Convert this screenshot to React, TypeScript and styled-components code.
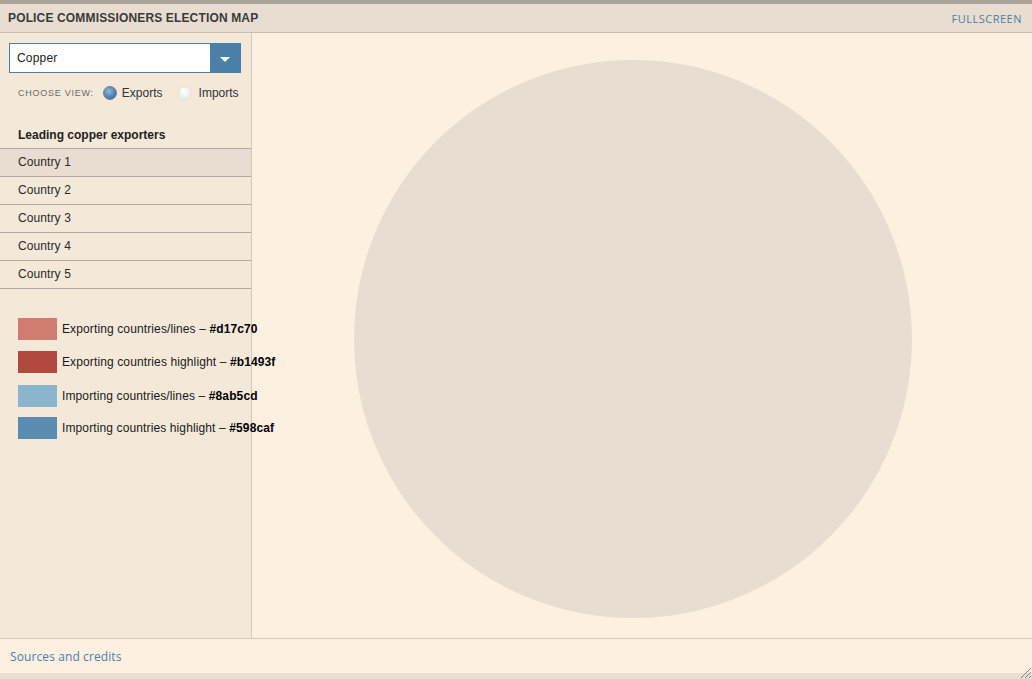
import React from "react";
import styled, { createGlobalStyle } from "styled-components";

const Global = createGlobalStyle`
  html, body { margin: 0; padding: 0; }
  body { font-family: "Liberation Sans", Arial, sans-serif; background: #fdf0e1; overflow: hidden; }
`;

const Frame = styled.div`
  width: 1032px;
  height: 679px;
  box-sizing: border-box;
  border-top: 4px solid #a9a59b;
  background: #e8ddd0;
  display: flex;
  flex-direction: column;
`;

const Header = styled.header`
  height: 28px;
  border-bottom: 1px solid #c9bdae;
  display: flex;
  align-items: center;
  justify-content: space-between;
  padding: 0 10px 0 8px;
  flex-shrink: 0;
`;

const Title = styled.h1`
  margin: 0;
  font-family: "Liberation Sans", Arial, sans-serif;
  font-weight: bold;
  font-size: 12px;
  color: #3a3a3a;
  letter-spacing: 0.15px;
`;

const LinkText = styled.a<{ $size?: number; $spacing?: number }>`
  font-family: "Open Sans", "Roboto", sans-serif;
  font-size: ${(p) => p.$size ?? 11}px;
  letter-spacing: ${(p) => p.$spacing ?? 0}px;
  color: #4b7ea8;
  text-decoration: none;
  cursor: pointer;
`;

const Body = styled.div`
  display: flex;
  height: 605px;
  flex-shrink: 0;
`;

const Sidebar = styled.aside`
  width: 251px;
  flex-shrink: 0;
  background: #f4e8d9;
  border-right: 1px solid #d4c8ba;
  padding-top: 10px;
  box-sizing: content-box;
  position: relative;
  z-index: 1;
`;

const Select = styled.div`
  margin-left: 9px;
  width: 232px;
  height: 30px;
  box-sizing: border-box;
  border: 1px solid #4a7fa8;
  background: #fff;
  display: flex;
  align-items: center;
`;

const SelectLabel = styled.span`
  flex: 1;
  padding-left: 7px;
  font-size: 12px;
  color: #222;
  letter-spacing: 0.2px;
  font-family: "Liberation Sans", Arial, sans-serif;
`;

const SelectButton = styled.span`
  width: 30px;
  height: 100%;
  background: #4a7fa8;
  display: flex;
  align-items: center;
  justify-content: center;
`;

const Arrow = styled.span`
  width: 0;
  height: 0;
  border-left: 5px solid transparent;
  border-right: 5px solid transparent;
  border-top: 5px solid #fff;
  margin-top: 2px;
`;

const ViewRow = styled.div`
  display: flex;
  align-items: center;
  margin: 11px 0 0 18px;
  height: 18px;
`;

const ViewLabel = styled.span`
  font-size: 9px;
  letter-spacing: 0.75px;
  color: #6e6a64;
  margin-right: 9px;
`;

const Radio = styled.span<{ $checked?: boolean; $gap: number }>`
  width: 14px;
  height: 14px;
  border-radius: 50%;
  box-sizing: border-box;
  margin-right: ${(p) => p.$gap}px;
  background: ${(p) =>
    p.$checked
      ? "radial-gradient(circle at 40% 35%, #8fb8da 0%, #4f86b4 55%, #2f5f88 100%)"
      : "radial-gradient(circle at 40% 35%, #ffffff 0%, #eeeeee 60%, #e2e2e2 100%)"};
  border: 1px solid ${(p) => (p.$checked ? "#6d7f8f" : "#e6e1d9")};
`;

const RadioText = styled.span<{ $gap?: number }>`
  font-size: 12px;
  color: #333;
  margin-right: ${(p) => p.$gap ?? 0}px;
`;

const ListTitle = styled.h2`
  margin: 26px 0 0 18px;
  font-size: 12px;
  font-weight: bold;
  color: #222;
  height: 20px;
  line-height: 14px;
`;

const List = styled.ul`
  margin: 0;
  padding: 0;
  list-style: none;
  border-top: 1px solid #b0aa9f;
`;

const Row = styled.li<{ $active?: boolean }>`
  height: 28px;
  box-sizing: border-box;
  padding-bottom: 2px;
  border-bottom: 1px solid #b0aa9f;
  background: ${(p) => (p.$active ? "#e8ddd0" : "transparent")};
  display: flex;
  align-items: center;
  padding-left: 18px;
  font-size: 12px;
  letter-spacing: 0.1px;
  color: #2a2a2a;
`;

const Legend = styled.div`
  margin: 29px 0 0 18px;
  display: flex;
  flex-direction: column;
`;

const LegendItem = styled.div<{ $gap: number }>`
  display: flex;
  align-items: center;
  margin-bottom: ${(p) => p.$gap}px;
  white-space: nowrap;
`;

const Swatch = styled.span<{ $color: string }>`
  width: 39px;
  height: 22px;
  background: ${(p) => p.$color};
  margin-right: 5px;
  flex-shrink: 0;
`;

const LegendText = styled.span`
  font-size: 12px;
  letter-spacing: 0.12px;
  color: #1a1a1a;
  b { color: #000; }
`;

const Main = styled.main`
  flex: 1;
  background: #fdf0e1;
  position: relative;
`;

const MapSvg = styled.svg`
  display: block;
  width: 100%;
  height: 100%;
`;

const Footer = styled.footer`
  height: 34px;
  border-top: 1px solid #d4c8ba;
  background: #fdf0e1;
  display: flex;
  align-items: center;
  padding-left: 10px;
  flex-shrink: 0;
`;

const BottomStrip = styled.div`
  flex: 1;
  background: #e8ddd0;
  position: relative;
`;

const Grip = styled.svg`
  position: absolute;
  right: 0;
  bottom: 0;
`;

const countries = ["Country 1", "Country 2", "Country 3", "Country 4", "Country 5"];

const legend = [
  { color: "#d17c70", label: "Exporting countries/lines", hex: "#d17c70", gap: 11 },
  { color: "#b1493f", label: "Exporting countries highlight", hex: "#b1493f", gap: 12 },
  { color: "#8ab5cd", label: "Importing countries/lines", hex: "#8ab5cd", gap: 10 },
  { color: "#598caf", label: "Importing countries highlight", hex: "#598caf", gap: 0 },
];

export default function App() {
  return (
    <>
      <Global />
      <Frame>
        <Header>
          <Title>POLICE COMMISSIONERS ELECTION MAP</Title>
          <LinkText $spacing={0.5}>FULLSCREEN</LinkText>
        </Header>
        <Body>
          <Sidebar>
            <Select>
              <SelectLabel>Copper</SelectLabel>
              <SelectButton>
                <Arrow />
              </SelectButton>
            </Select>
            <ViewRow>
              <ViewLabel>CHOOSE VIEW:</ViewLabel>
              <Radio $checked $gap={5} />
              <RadioText $gap={15}>Exports</RadioText>
              <Radio $gap={7} />
              <RadioText>Imports</RadioText>
            </ViewRow>
            <ListTitle>Leading copper exporters</ListTitle>
            <List>
              {countries.map((c, i) => (
                <Row key={c} $active={i === 0}>
                  {c}
                </Row>
              ))}
            </List>
            <Legend>
              {legend.map((l) => (
                <LegendItem key={l.hex} $gap={l.gap}>
                  <Swatch $color={l.color} />
                  <LegendText>
                    {l.label} – <b>{l.hex}</b>
                  </LegendText>
                </LegendItem>
              ))}
            </Legend>
          </Sidebar>
          <Main>
            <MapSvg viewBox="0 0 780 605" preserveAspectRatio="xMinYMin meet">
              <circle cx="381" cy="306" r="279" fill="#e8ddd0" />
            </MapSvg>
          </Main>
        </Body>
        <Footer>
          <LinkText $size={12} $spacing={0.1}>Sources and credits</LinkText>
        </Footer>
        <BottomStrip>
          <Grip width="12" height="12" viewBox="0 0 12 12">
            <path d="M11 1 L1 11 M11 5 L5 11 M11 9 L9 11" stroke="#8a857c" strokeWidth="1" />
          </Grip>
        </BottomStrip>
      </Frame>
    </>
  );
}
